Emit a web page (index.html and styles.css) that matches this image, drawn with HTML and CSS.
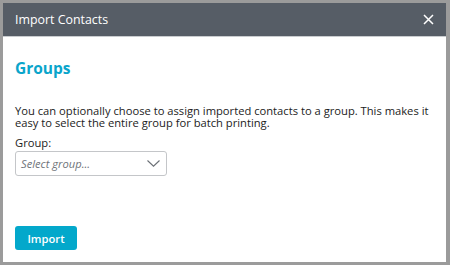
FILE: index.html
```html
<!DOCTYPE html>
<html>
<head>
<meta charset="utf-8">
<link rel="stylesheet" href="styles.css">
</head>
<body>
<div class="dialog">
  <div class="header">
    <span class="title">Import Contacts</span>
    <svg class="close" width="11" height="11" viewBox="0 0 11 11"><path d="M1 1L10 10M10 1L1 10" stroke="#fff" stroke-width="1.5" fill="none"/></svg>
  </div>
  <div class="body">
    <h2 class="heading">Groups</h2>
    <p class="desc">You can optionally choose to assign imported contacts to a group. This makes it easy to select the entire group for batch printing.</p>
    <label class="label">Group:</label>
    <div class="select">
      <span class="placeholder">Select group...</span>
      <svg width="13" height="7" viewBox="0 0 13 7"><path d="M0.5 0.5L6.5 6.2L12.5 0.5" stroke="#6b7076" stroke-width="1.1" fill="none"/></svg>
    </div>
    <div class="spacer"></div>
    <button class="btn">Import</button>
  </div>
</div>
</body>
</html>
```
FILE: styles.css
```css
html, body { margin: 0; padding: 0; }
body {
  width: 450px; height: 265px; box-sizing: border-box;
  background: #9b9b9b;
  padding: 3px 4px 3px 3px;
  font-family: "Open Sans", sans-serif;
}
.dialog {
  height: 100%;
  background: #fff;
  display: flex; flex-direction: column;
}
.header {
  height: 33px;
  background: #565d66;
  border-bottom: 1px solid #c9cccf;
  display: flex; align-items: center; justify-content: space-between;
  padding: 0 12px 0 12px;
}
.title { color: #fff; font-size: 12.4px; }
.close { display: block; }
.body {
  flex: 1;
  display: flex; flex-direction: column; align-items: flex-start;
  padding: 19px 12px 12px 12px;
}
.heading {
  margin: 0; font-size: 15.5px; font-weight: 700; color: #0aa5cb;
  line-height: 24px;
}
.desc {
  margin: 25px 0 0 0; font-size: 11.2px; line-height: 12px; color: #222;
}
.label { margin-top: 6px; font-size: 11.2px; line-height: 15px; color: #222; }
.select {
  margin-top: 1px;
  width: 152px; height: 25px; box-sizing: border-box;
  border: 1px solid #c4c6c9; border-radius: 3px;
  display: flex; align-items: center; justify-content: space-between;
  padding: 0 6px 0 5px;
}
.placeholder { font-style: italic; font-size: 11.2px; color: #6f747a; }
.spacer { flex: 1; }
.btn {
  width: 62px; height: 24px;
  background: #03a8cb; color: #fff; border: none; border-radius: 3px;
  font-family: "Open Sans", sans-serif; font-size: 11.2px; font-weight: 600;
  padding: 0;
}
```
